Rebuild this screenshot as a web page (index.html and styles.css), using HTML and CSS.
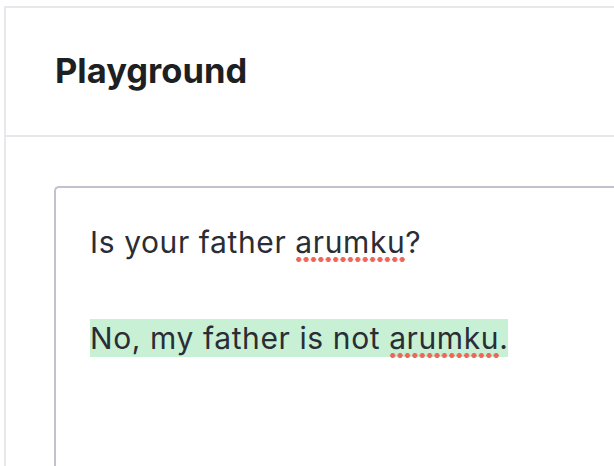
FILE: index.html
```html
<!DOCTYPE html>
<html lang="en">

<head>
    <meta charset="UTF-8">
    <meta name="viewport" content="width=device-width, initial-scale=1">
    <title>Playground</title>
    <link rel="stylesheet" href="styles.css">
</head>

<body>

    <div class="panel">
        <header class="panel-header">
            <h1 class="title">Playground</h1>
        </header>
        <div class="panel-body">
            <div class="editor" contenteditable="true" spellcheck="false">
                <p class="line">Is your father <span class="typo">arumku</span>?</p>
                <p class="line"><span class="match">No, my father is not <span class="typo">arumku</span>.</span></p>
            </div>
        </div>
    </div>

</body>

</html>
```

FILE: styles.css
```css
html,
body {
    margin: 0;
    height: 100%;
    overflow: hidden;
}

body {
    background: #fff;
    font-family: Inter, "Noto Sans", sans-serif;
}

.panel {
    margin: 6px 0 0 4px;
    border-top: 2px solid #e7e7ec;
    border-left: 2px solid #e7e7ec;
    height: 460px;
    box-sizing: border-box;
    width: 610px;
    overflow: hidden;
}

.panel-header {
    border-bottom: 2px solid #e7e7ec;
    height: 127px;
    display: flex;
    align-items: center;
    padding-left: 49px;
}

.title {
    margin: 0 0 2px;
    font-size: 34.5px;
    font-weight: 700;
    color: #1e1f22;
}

.panel-body {
    padding: 49px 0 0 48px;
}

.editor {
    border-top: 2px solid #c2c2cf;
    border-left: 2px solid #c2c2cf;
    border-top-left-radius: 5px;
    height: 400px;
    padding: 35px 0 0 34px;
    outline: none;
}

.line {
    margin: 0 0 58px;
    font-size: 30px;
    line-height: 38px;
    letter-spacing: 0.6px;
    color: #2a2d35;
}

.match {
    background: #c7f0d4;
    padding: 1px 0;
}

.typo {
    padding-bottom: 2px;
    background-image: radial-gradient(circle, #f26455 2.3px, transparent 2.7px);
    background-size: 7.4px 5px;
    background-repeat: repeat-x;
    background-position: 0 100%;
}
```
